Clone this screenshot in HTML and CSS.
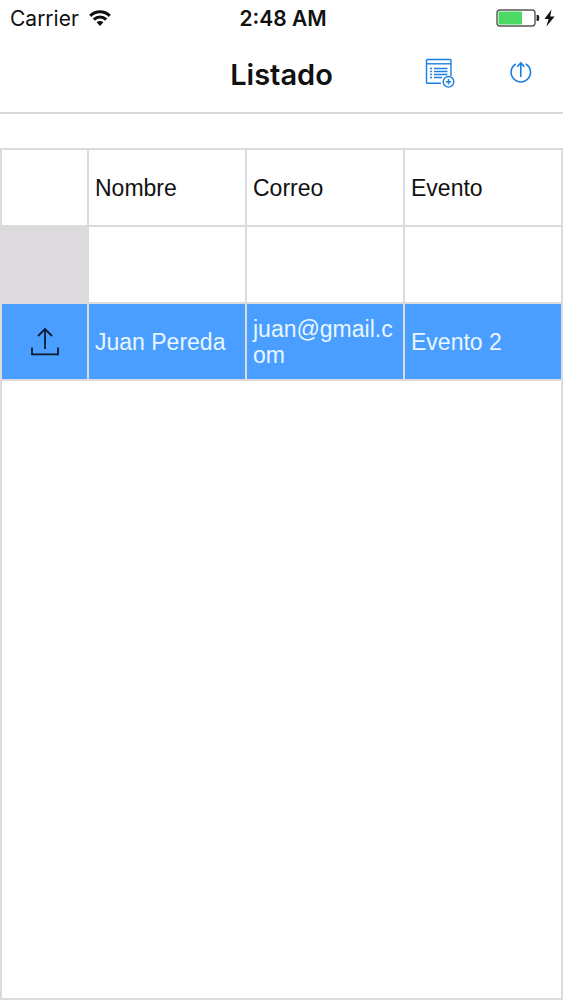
FILE: index.html
```html
<!DOCTYPE html>
<html lang="es">
<head>
    <meta charset="UTF-8">
    <meta name="viewport" content="width=device-width, initial-scale=1.0">
    <title>Listado</title>
    <link rel="stylesheet" href="styles.css">
</head>
<body>
    <div class="status-bar">
        <div class="status-left">
            <span>Carrier</span>
            <svg width="22" height="17" viewBox="0 0 22 17" aria-hidden="true">
                <g fill="none" stroke="#111" stroke-width="3">
                    <path d="M1.2 5.8 C6.8 0.4 15.2 0.4 20.8 5.8"/>
                    <path d="M4.8 9.6 C8.3 6.2 13.7 6.2 17.2 9.6"/>
                </g>
                <path d="M7.6 12.3 C9.6 10.5 12.4 10.5 14.4 12.3 L11 16 Z" fill="#111"/>
            </svg>
        </div>
        <div class="status-time">2:48 AM</div>
        <div class="status-right">
            <svg width="60" height="20" viewBox="0 0 60 20" aria-hidden="true">
                <rect x="1" y="2" width="38" height="16" rx="3" fill="#fff" stroke="#555" stroke-width="1.4"/>
                <rect x="2.5" y="3.5" width="23.5" height="13" rx="1" fill="#4cd964"/>
                <path d="M40.6 7 h1.2 a1.4 1.4 0 0 1 1.4 1.4 v3.2 a1.4 1.4 0 0 1 -1.4 1.4 h-1.2 Z" fill="#222"/>
                <path d="M55.5 1.5 L48.5 11 H52.6 L50.4 18.6 L58.6 8.4 H54.2 Z" fill="#111"/>
            </svg>
        </div>
    </div>

    <header class="nav-bar">
        <h1>Listado</h1>
        <div class="nav-actions">
            <button type="button" aria-label="Agregar registro">
                <svg width="32" height="32" viewBox="0 0 32 32" fill="none" stroke="#1a7fe0" stroke-width="1.4">
                    <path d="M18 25.3 H4.5 a1 1 0 0 1 -1 -1 V2.5 a1 1 0 0 1 1 -1 H27 a1 1 0 0 1 1 1 V18"/>
                    <path d="M3.5 5.8 H28"/>
                    <path d="M11 10.5 H24.5 M11 13.5 H24.5 M11 16.5 H24.5 M11 19.5 H19"/>
                    <path d="M7 10.5 H9 M7 13.5 H9 M7 16.5 H9 M7 19.5 H9"/>
                    <circle cx="25.5" cy="23.8" r="5.3"/>
                    <path d="M25.5 21 V26.6 M22.7 23.8 H28.3"/>
                </svg>
            </button>
            <button type="button" aria-label="Enviar todo">
                <svg width="32" height="32" viewBox="0 0 32 32" fill="none" stroke="#1a7fe0" stroke-width="1.6">
                    <path d="M10.8 6 A9.7 9.7 0 1 0 20.8 6"/>
                    <path d="M15.8 19 V5 M12.2 8.6 L15.8 5 L19.4 8.6"/>
                </svg>
            </button>
        </div>
    </header>

    <main class="list">
        <table>
            <colgroup>
                <col class="col-action">
                <col class="col-text">
                <col class="col-text">
                <col>
            </colgroup>
            <thead>
                <tr>
                    <td></td>
                    <th scope="col">Nombre</th>
                    <th scope="col">Correo</th>
                    <th scope="col">Evento</th>
                </tr>
            </thead>
            <tbody>
                <tr>
                    <td class="blank"></td>
                    <td></td>
                    <td></td>
                    <td></td>
                </tr>
                <tr class="selected">
                    <td class="action">
                        <button type="button" aria-label="Enviar registro">
                            <svg width="30" height="30" viewBox="0 0 30 30" fill="none" stroke="#0b1c30" stroke-width="1.8">
                                <path d="M2 20.5 V27.3 H28 V20.5"/>
                                <path d="M15 22 V2 M8 9 L15 2 L22 9"/>
                            </svg>
                        </button>
                    </td>
                    <td>Juan Pereda</td>
                    <td>juan@gmail.com</td>
                    <td>Evento 2</td>
                </tr>
            </tbody>
        </table>
    </main>
</body>
</html>
```

FILE: styles.css
```css
* {
    box-sizing: border-box;
}
body {
    display: flex;
    flex-direction: column;
    min-height: 100vh;
    margin: 0;
    background-color: #fff;
    color: #111;
    font-family: "Liberation Sans", Arial, sans-serif;
}
button {
    display: flex;
    padding: 0;
    border: none;
    background: none;
    cursor: pointer;
}
svg {
    display: block;
}
.status-bar {
    display: grid;
    grid-template-columns: 1fr auto 1fr;
    align-items: center;
    height: 36px;
    padding: 0 7px 0 10px;
    font-family: Inter, Roboto, sans-serif;
    font-size: 21px;
}
.status-left {
    display: flex;
    align-items: center;
    gap: 10px;
}
.status-time {
    font-weight: 600;
}
.status-right {
    display: flex;
    justify-content: flex-end;
}
.nav-bar {
    display: grid;
    grid-template-columns: 1fr auto 1fr;
    align-items: center;
    height: 78px;
    padding: 0 26px;
    border-bottom: 2px solid #d9d7da;
}
.nav-bar h1 {
    grid-column: 2;
    margin: 0;
    font-family: Inter, Roboto, sans-serif;
    font-size: 29px;
    font-weight: 600;
}
.nav-actions {
    display: flex;
    justify-content: flex-end;
    gap: 50px;
}
.list {
    flex: 1;
    margin-top: 34px;
    border: 2px solid #dcdadd;
}
table {
    width: 100%;
    table-layout: fixed;
    border-collapse: separate;
    border-spacing: 0;
}
.col-action {
    width: 87px;
}
.col-text {
    width: 158px;
}
th, td {
    height: 77px;
    padding: 0 6px;
    border-right: 2px solid #dcdadd;
    border-bottom: 2px solid #dcdadd;
    font-size: 23px;
    font-weight: normal;
    line-height: 26px;
    text-align: left;
    vertical-align: middle;
    overflow-wrap: anywhere;
}
th:last-child, td:last-child {
    border-right: none;
}
.blank {
    background-color: #dcdadd;
}
.selected {
    background-color: #4a9eff;
    color: #e9f6ff;
}
.action button {
    margin: 0 auto;
}
```
